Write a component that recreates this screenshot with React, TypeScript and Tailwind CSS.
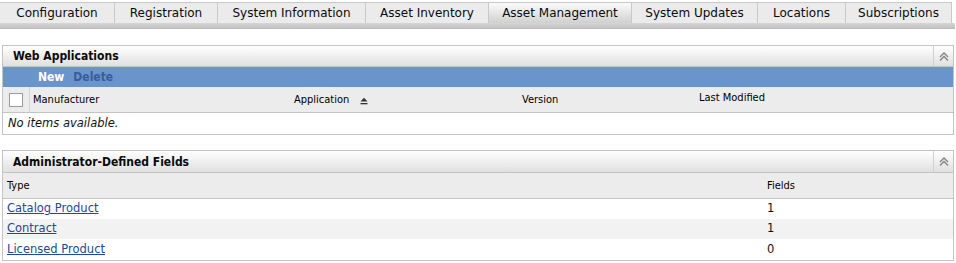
import React from "react";

const tabs: { label: string; w: string; active?: boolean }[] = [
  { label: "Configuration", w: "w-[115px]" },
  { label: "Registration", w: "w-[103px]" },
  { label: "System Information", w: "w-[148px]" },
  { label: "Asset Inventory", w: "w-[123px]" },
  { label: "Asset Management", w: "w-[143px]", active: true },
  { label: "System Updates", w: "w-[126px]" },
  { label: "Locations", w: "w-[88px]" },
  { label: "Subscriptions", w: "w-[106px]" },
];

const COND = { fontFamily: '"DejaVu Sans Condensed", "DejaVu Sans", sans-serif', fontStretch: "condensed" as const };

function Collapse() {
  return (
    <div className="w-[20px] self-stretch border-l border-[#d0d0d0] flex items-center justify-center">
      <svg width="10" height="9" viewBox="0 0 10 9">
        <path d="M1 5 L5 1 L9 5" fill="none" stroke="#808080" strokeWidth="1.3" />
        <path d="M1 8.5 L5 4.5 L9 8.5" fill="none" stroke="#808080" strokeWidth="1.3" />
      </svg>
    </div>
  );
}

function PanelHeader({ title, h }: { title: string; h: string }) {
  return (
    <div className={`flex ${h} bg-gradient-to-b from-[#ffffff] to-[#e0e0e0] border-b border-[#c4c4c4]`}>
      <div className="flex-1 flex items-center pl-[10px] text-[12px] font-bold text-[#0a0a0a]" style={COND}>
        {title}
      </div>
      <Collapse />
    </div>
  );
}

function SortIcon() {
  return (
    <svg width="8" height="8" viewBox="0 0 8 8" className="ml-[11px] mt-[2px]">
      <path d="M0.5 4.5 L4 0.8 L7.5 4.5 Z" fill="#333" />
      <rect x="0.5" y="6" width="7" height="1.3" fill="#333" />
    </svg>
  );
}

export default function App() {
  return (
    <div
      className="w-[956px] h-[263px] bg-white overflow-hidden text-[#111]"
      style={{ fontFamily: '"DejaVu Sans", "Liberation Sans", sans-serif' }}
    >
      {/* Tabs */}
      <div className="pt-[2px]">
        <div className="flex h-[21px] border-t border-[#c8c8c8] w-[952px]">
          {tabs.map((t) => (
            <div
              key={t.label}
              className={`${t.w} h-full flex items-center justify-center border-r border-[#c8c8c8] text-[12px] text-[#0a0a0a] ${
                t.active ? "bg-gradient-to-b from-[#fbfbfb] to-[#cfd1cf]" : "bg-[#ebebeb]"
              }`}
            >
              {t.label}
            </div>
          ))}
        </div>
        <div className="h-[6px] w-[955px] bg-gradient-to-b from-[#d6d6d6] to-[#c2c2c2] border-b border-[#bdbdbd]" />
      </div>

      {/* Web Applications */}
      <div className="mx-[2px] mt-[16px] w-[952px] border border-[#c4c4c4]">
        <PanelHeader title="Web Applications" h="h-[21px]" />
        <div
          className="h-[20px] bg-[#6a95cc] flex items-center pl-[35px] gap-[9px] text-[12px] font-bold"
          style={COND}
        >
          <span className="text-white">New</span>
          <span className="text-[#3a5b9a]">Delete</span>
        </div>
        <div className="flex h-[26px] bg-[#ececec] border-b border-[#c4c4c4] text-[11px] text-[#000]" style={COND}>
          <div className="w-[27px] border-r border-[#d4d4d4] flex items-center justify-center">
            <div className="w-[14px] h-[14px] border border-[#9a9a9a] bg-white" />
          </div>
          <div className="w-[263px] flex items-center pl-[3px] pt-[1px]">Manufacturer</div>
          <div className="w-[229px] flex items-center pl-[1px] pt-[1px]">
            Application
            <SortIcon />
          </div>
          <div className="w-[177px] flex items-center pt-[2px]">Version</div>
          <div className="flex-1 pt-[3px]">Last Modified</div>
        </div>
        <div className="h-[21px] flex items-center pl-[5px] pt-[1px] text-[11.5px] italic">No items available.</div>
      </div>

      {/* Administrator-Defined Fields */}
      <div className="mx-[2px] mt-[15px] w-[952px] border border-[#c4c4c4]">
        <PanelHeader title="Administrator-Defined Fields" h="h-[22px]" />
        <div className="flex h-[26px] bg-[#ececec] border-b border-[#c4c4c4] text-[11px] text-[#000]" style={COND}>
          <div className="w-[764px] flex items-center pl-[4px] pt-[1px]">Type</div>
          <div className="flex-1 flex items-center pt-[1px]">Fields</div>
        </div>
        {[
          ["Catalog Product", "1", "bg-white", "h-[20px]"],
          ["Contract", "1", "bg-[#f2f2f2]", "h-[20px]"],
          ["Licensed Product", "0", "bg-white", "h-[21px]"],
        ].map(([name, n, bg, h]) => (
          <div key={name} className={`flex ${h} items-center text-[11.5px] ${bg}`}>
            <div className="w-[764px] pl-[4px]">
              <a href="#" className="text-[#23479b] underline">
                {name}
              </a>
            </div>
            <div className="flex-1">{n}</div>
          </div>
        ))}
      </div>
    </div>
  );
}
